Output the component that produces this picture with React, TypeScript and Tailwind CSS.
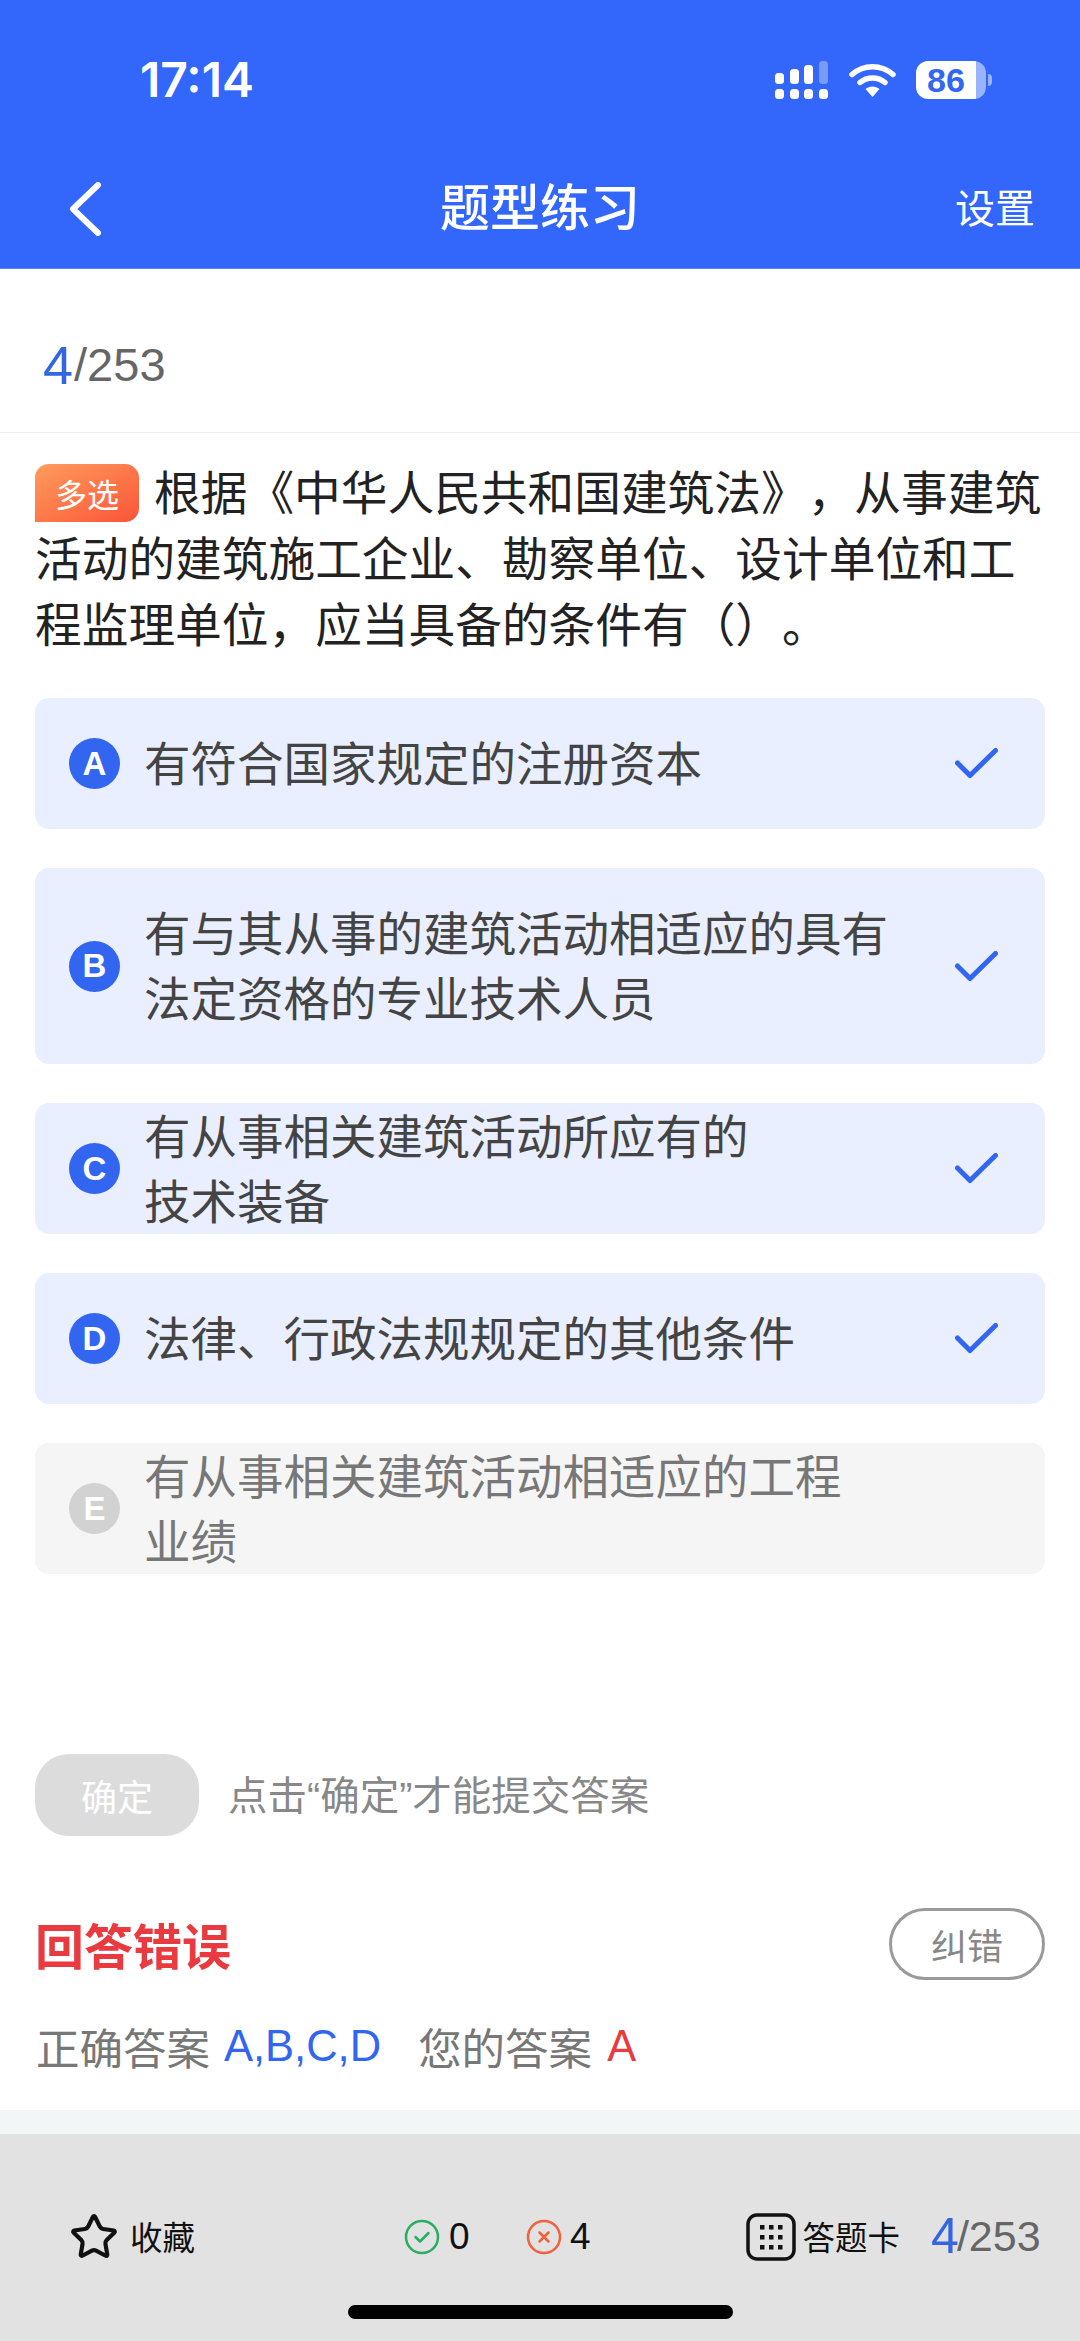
import React from 'react';
import { Star } from 'lucide-react';

const cjk = "font-['Noto_Sans_CJK_SC','Noto_Sans',sans-serif]";
const latin = "font-['Liberation_Sans','Noto_Sans_CJK_SC',sans-serif]";

interface OptionItem {
  letter: string;
  lines: string[];
  selected: boolean;
  tight?: boolean;
}

const OPTIONS: OptionItem[] = [
  { letter: 'A', lines: ['有符合国家规定的注册资本'], selected: true },
  { letter: 'B', lines: ['有与其从事的建筑活动相适应的具有', '法定资格的专业技术人员'], selected: true },
  { letter: 'C', lines: ['有从事相关建筑活动所应有的', '技术装备'], selected: true, tight: true },
  { letter: 'D', lines: ['法律、行政法规规定的其他条件'], selected: true },
  { letter: 'E', lines: ['有从事相关建筑活动相适应的工程', '业绩'], selected: false, tight: true },
];

const StatusIcons: React.FC = () => (
  <div className="flex items-center">
    <svg width="54" height="38" viewBox="0 0 54 38">
      <rect x="0" y="12" width="9" height="11" rx="3.5" fill="#fff" />
      <rect x="15" y="8" width="9" height="15" rx="3.5" fill="#fff" />
      <rect x="29" y="4" width="9" height="19" rx="3.5" fill="#fff" />
      <rect x="44" y="0" width="9" height="23" rx="3.5" fill="#fff" fillOpacity="0.35" />
      <rect x="0" y="28" width="9" height="10" rx="3.5" fill="#fff" />
      <rect x="15" y="28" width="9" height="10" rx="3.5" fill="#fff" />
      <rect x="29" y="28" width="9" height="10" rx="3.5" fill="#fff" />
      <rect x="44" y="28" width="9" height="10" rx="3.5" fill="#fff" />
    </svg>
    <svg className="ml-[20px]" width="47" height="36" viewBox="0 0 47 36" fill="none">
      <path d="M3 12.5C14.5 2 32.5 2 44 12.5" stroke="#fff" strokeWidth="5.5" strokeLinecap="round" />
      <path d="M11 20.5C18 14.5 29 14.5 36 20.5" stroke="#fff" strokeWidth="5.5" strokeLinecap="round" />
      <path d="M16.5 27C20.5 23.5 26.5 23.5 30.5 27L23.5 35Z" fill="#fff" />
    </svg>
    <div className="ml-[20px] flex items-center">
      <div className="h-[38px] w-[70px] overflow-hidden rounded-[12px] bg-white/50">
        <div className={`flex h-full w-[60px] items-center justify-center rounded-l-[12px] bg-white text-[34px] font-bold text-[#3366f5] ${latin}`}>
          86
        </div>
      </div>
      <div className="ml-[2px] h-[12px] w-[4px] rounded-r-full bg-white/50" />
    </div>
  </div>
);

const OptionRow: React.FC<{ item: OptionItem }> = ({ item }) => (
  <div
    className={`flex items-center rounded-[14px] pl-[34px] pr-[47px] ${item.tight ? 'h-[131px]' : 'py-[33px]'} ${
      item.selected ? 'bg-[#e9effe]' : 'bg-[#f5f5f5]'
    }`}
  >
    <div
      className={`flex h-[51px] w-[51px] shrink-0 items-center justify-center rounded-full text-[33px] font-bold text-white ${latin} ${
        item.selected ? 'bg-[#3366f0]' : 'bg-[#d2d2d2]'
      }`}
    >
      {item.letter}
    </div>
    <div className={`ml-[24px] flex-1 -translate-y-[3px] text-[46.5px] leading-[65px] ${item.selected ? 'text-[#444444]' : 'text-[#777777]'}`}>
      {item.lines.map(line => (
        <div key={line}>{line}</div>
      ))}
    </div>
    {item.selected && (
      <svg width="43" height="31" viewBox="0 0 43 31" fill="none">
        <path d="M2.5 15L15 27.5L40.5 2.5" stroke="#3366f0" strokeWidth="5" strokeLinecap="round" strokeLinejoin="round" />
      </svg>
    )}
  </div>
);

const App: React.FC = () => {
  return (
    <div className={`flex min-h-[2341px] w-[1080px] flex-col bg-white [text-spacing-trim:space-all] ${cjk}`}>
      <header className="h-[269px] border-b border-[#5a85f8] bg-[#3366fa] text-white">
        <div className="flex h-[160px] items-center justify-between pl-[140px] pr-[88px]">
          <span className="font-['Inter',sans-serif] text-[48px] font-semibold">17:14</span>
          <StatusIcons />
        </div>
        <div className="relative flex h-[108px] items-start justify-center">
          <span className="mt-[9px] text-[50px] font-medium leading-[70px]">题型练习</span>
          <svg className="absolute left-[68px] top-[22px]" width="34" height="54" viewBox="0 0 34 54" fill="none">
            <path d="M30 3L5 27L30 51" stroke="#fff" strokeWidth="6" strokeLinecap="round" strokeLinejoin="round" />
          </svg>
          <span className="absolute right-[45px] top-[18px] text-[40px] leading-[56px]">设置</span>
        </div>
      </header>

      <div className={`flex h-[164px] items-center border-b border-[#eeeeee] pl-[43px] pt-[30px] ${latin}`}>
        <span className="text-[54px] text-[#3366e0]">4</span>
        <span className="ml-[1px] text-[47px] text-[#666666]">/253</span>
      </div>

      <div className="px-[35px] pt-[24px] text-[46.7px] leading-[66px] text-[#222222]">
        <span className="mr-[15px] inline-flex h-[58px] w-[104px] items-center justify-center rounded-[14px] rounded-bl-none bg-gradient-to-br from-[#ff9a5c] to-[#fa5238] align-[3px] text-[32px] leading-none text-white">
          多选
        </span>
        根据《中华人民共和国建筑法》，从事建筑
        <br />
        活动的建筑施工企业、勘察单位、设计单位和工
        <br />
        程监理单位，应当具备的条件有（）。
      </div>

      <div className="mt-[43px] flex flex-col gap-[39px] px-[35px]">
        {OPTIONS.map(item => (
          <OptionRow key={item.letter} item={item} />
        ))}
      </div>

      <div className="mt-[180px] flex items-center px-[35px]">
        <div className="flex h-[82px] w-[164px] items-center justify-center rounded-[34px] bg-[#dcdcdc] text-[36px] text-white">
          确定
        </div>
        <span className="ml-[29px] text-[39.5px] text-[#888888]">
          点击<span className={latin}>“</span>确定<span className={latin}>”</span>才能提交答案
        </span>
      </div>

      <div className="mt-[71px] flex items-center justify-between px-[35px]">
        <span className="text-[49px] font-bold text-[#e83a3f]">回答错误</span>
        <div className="flex h-[72px] w-[156px] items-center justify-center rounded-full border-[3px] border-[#9a9a9a] text-[36px] text-[#888888]">
          纠错
        </div>
      </div>

      <div className="mt-[36px] flex h-[60px] items-center pl-[36px] text-[43.5px] text-[#777777]">
        <span>正确答案</span>
        <span className={`ml-[14px] text-[43.5px] text-[#3366f0] ${latin}`}>A,B,C,D</span>
        <span className="ml-[37px]">您的答案</span>
        <span className={`ml-[15px] text-[43.5px] text-[#e83a3f] ${latin}`}>A</span>
      </div>

      <div className="mt-[33px] h-[24px] bg-[#f3f6f7]" />

      <footer className="relative flex flex-1 flex-col bg-[#e2e2e2]">
        <div className="mt-[78px] flex h-[50px] items-center text-[32.5px] text-[#111111]">
          <Star className="ml-[69px]" size={50} strokeWidth={2} color="#111111" />
          <span className="ml-[11px]">收藏</span>

          <svg className="ml-[209px]" width="36" height="36" viewBox="0 0 36 36" fill="none">
            <circle cx="18" cy="18" r="16" stroke="#27ae60" strokeWidth="2.5" />
            <path d="M11.5 18L16 22.5L24.5 14" stroke="#27ae60" strokeWidth="2.5" strokeLinecap="round" strokeLinejoin="round" />
          </svg>
          <span className={`ml-[9px] w-[77px] text-[37px] ${latin}`}>0</span>

          <svg width="36" height="36" viewBox="0 0 36 36" fill="none">
            <circle cx="18" cy="18" r="16" stroke="#f2603c" strokeWidth="2.5" />
            <path d="M13.5 13.5L22.5 22.5M22.5 13.5L13.5 22.5" stroke="#f2603c" strokeWidth="2.5" strokeLinecap="round" />
          </svg>
          <span className={`ml-[8px] text-[37px] ${latin}`}>4</span>

          <svg className="ml-[155px]" width="50" height="48" viewBox="0 0 50 48" fill="none">
            <rect x="2" y="2" width="46" height="44" rx="9" stroke="#111111" strokeWidth="3.5" />
            {[16, 25, 34].map(x =>
              [14, 24, 34].map(y => <rect key={`${x}-${y}`} x={x - 2} y={y - 2} width="4.5" height="4.5" fill="#111111" />)
            )}
          </svg>
          <span className="ml-[7px] whitespace-nowrap">答题卡</span>
          <span className={`ml-[31px] text-[50px] text-[#3366e0] ${latin}`}>4</span>
          <span className={`-ml-[2px] text-[43px] text-[#666666] ${latin}`}>/253</span>
        </div>
        <div className="absolute bottom-[22px] left-[348px] h-[14px] w-[385px] rounded-full bg-black" />
      </footer>
    </div>
  );
};

export default App;
